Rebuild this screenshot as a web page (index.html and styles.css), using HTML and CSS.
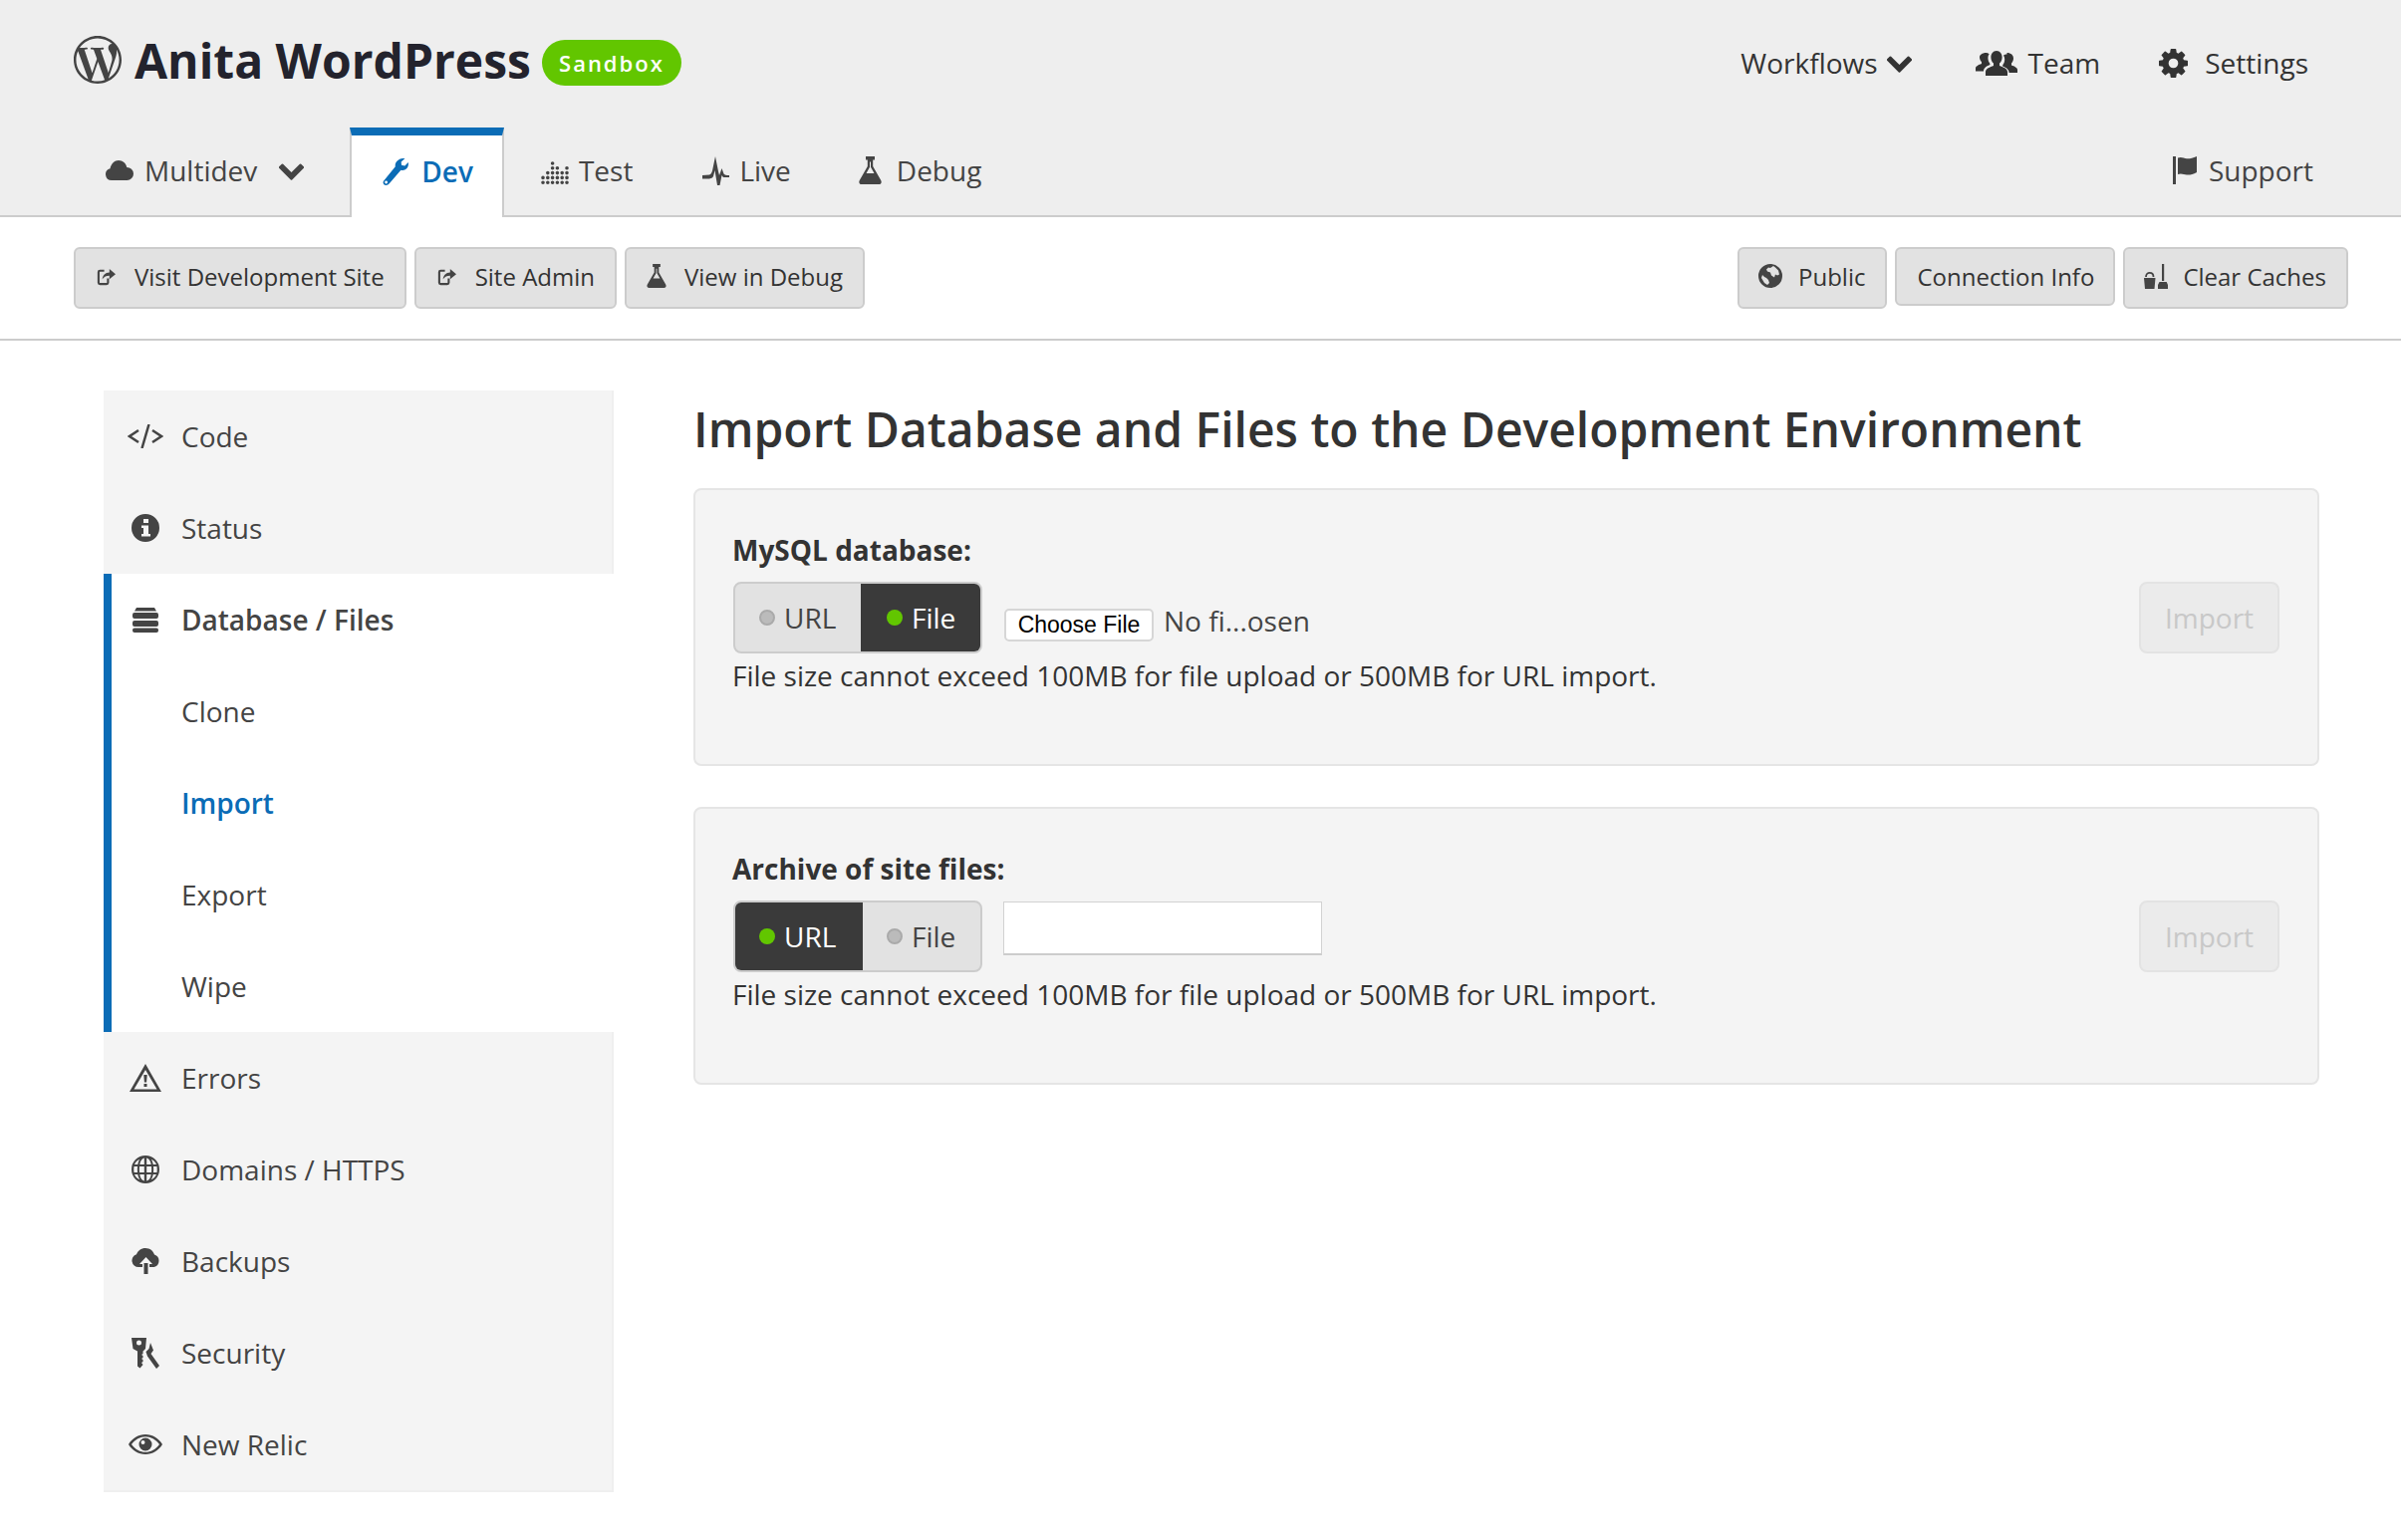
FILE: index.html
```html
<!DOCTYPE html>
<html lang="en">
<head>
<meta charset="UTF-8" />
<title>Anita WordPress - Import</title>
<link rel="stylesheet" href="styles.css">
</head>
<body>
  <!-- icon sprite -->
  <svg class="sprite" aria-hidden="true">
    <symbol id="i-wp" viewBox="0 0 24 24"><path d="M21.469 6.825c.84 1.537 1.318 3.3 1.318 5.175 0 3.979-2.156 7.456-5.363 9.325l3.295-9.527c.615-1.54.82-2.771.82-3.864 0-.405-.026-.78-.07-1.11m-7.981.105c.647-.03 1.232-.105 1.232-.105.582-.075.514-.93-.067-.899 0 0-1.755.135-2.88.135-1.064 0-2.85-.15-2.85-.15-.585-.03-.661.855-.075.885 0 0 .54.061 1.125.09l1.68 4.605-2.37 7.08L5.354 6.9c.649-.03 1.234-.1 1.234-.1.585-.075.516-.93-.065-.896 0 0-1.746.138-2.874.138-.2 0-.438-.008-.69-.015C4.911 3.15 8.235 1.215 12 1.215c2.809 0 5.365 1.072 7.286 2.833-.046-.003-.091-.009-.141-.009-1.06 0-1.812.923-1.812 1.914 0 .89.513 1.643 1.06 2.531.411.72.89 1.643.89 2.977 0 .915-.354 1.994-.821 3.479l-1.075 3.585-3.9-11.61.001.014zM12 22.784c-1.059 0-2.081-.153-3.048-.437l3.237-9.406 3.315 9.087c.024.053.05.101.078.149-1.12.393-2.325.609-3.582.609M1.211 12c0-1.564.336-3.05.935-4.39L7.29 21.709C3.694 19.96 1.212 16.271 1.211 12M12 0C5.385 0 0 5.385 0 12s5.385 12 12 12 12-5.385 12-12S18.615 0 12 0"/></symbol>
    <symbol id="i-chevron" viewBox="100 380 1592 1200"><path d="M1683 808l-742 741q-19 19-45 19t-45-19l-742-741q-19-19-19-45.5t19-45.5l166-165q19-19 45-19t45 19l531 531 531-531q19-19 45-19t45 19l166 165q19 19 19 45.5t-19 45.5z"/></symbol>
    <symbol id="i-cog" viewBox="128 128 1536 1536"><path d="M1152 896q0-106-75-181t-181-75-181 75-75 181 75 181 181 75 181-75 75-181zm512-109v222q0 12-8 23t-20 13l-185 28q-19 54-39 91 35 50 107 138 10 12 10 25t-9 23q-27 37-99 108t-94 71q-12 0-26-9l-138-108q-44 23-91 38-16 136-29 186-7 28-36 28h-222q-14 0-24.5-8.5t-11.5-21.5l-28-184q-49-16-90-37l-141 107q-10 9-25 9-14 0-25-11-126-114-165-168-7-10-7-23 0-12 8-23 15-21 51-66.5t54-70.5q-27-50-41-99l-183-27q-13-2-21-12.5t-8-23.5v-222q0-12 8-23t19-13l186-28q14-46 39-92-40-57-107-138-10-12-10-24 0-10 9-23 26-36 98.5-107.5t94.5-71.5q13 0 26 10l138 107q44-23 91-38 16-136 29-186 7-28 36-28h222q14 0 24.5 8.5t11.5 21.5l28 184q49 16 90 37l142-107q9-9 24-9 13 0 25 10 129 119 165 170 7 8 7 22 0 12-8 23-15 21-51 66.5t-54 70.5q26 50 41 98l183 28q13 2 21 12.5t8 23.5z"/></symbol>
    <symbol id="i-team" viewBox="0 0 42 26"><path d="M21 1c3.6 0 5.6 3 5.6 6.6 0 2.6-1 4.800-2.600 6v2.400c3.400 1.200 8 3 8 6V26H10v-4c0-3 4.600-4.800 8-6v-2.400c-1.600-1.200-2.600-3.400-2.600-6C15.400 4 17.400 1 21 1z"/><path d="M10.500 3c1.200 0 2.300.4 3.100 1.200-.8 1.200-1.200 2.500-1.200 3.900 0 2.200.7 4.300 2 5.800v1.200c-2.700 1-6.400 3-6.400 6.400H0v-3c0-2 3-3.500 6-4.500v-2c-1.200-1-2-2.800-2-4.800C4 5.400 6.500 3 10.500 3zM31.500 3C35.500 3 38 5.400 38 8.600c0 2-.8 3.800-2 4.800v2c3 1 6 2.500 6 4.500v3h-8.400c0-3.400-3.700-5.400-6.400-6.400v-1.200c1.300-1.500 2-3.600 2-5.800 0-1.400-.4-2.700-1.200-3.900.8-.8 1.900-1.200 3.500-1.200z"/></symbol>
    <symbol id="i-cloud" viewBox="0 0 28 20"><path d="M6 20a6 6 0 0 1-1.500-11.800C5.500 3.500 9 0 13 0c4.300 0 7.600 3 8.300 7A6.600 6.600 0 0 1 28 13.500 6.500 6.500 0 0 1 21.500 20z"/></symbol>
    <symbol id="i-wrench" viewBox="0 0 26 27"><path fill-rule="evenodd" d="M22.500 0l-3.800 3.400.3 3.400 3.300.7L25.800 4c.6 3-.6 6-3 7.300-1.300.7-3 .9-4.400.5L7 25c-1.300 1.500-3 2.400-4.500 1.800C.6 26 0 24 1.200 22.400L12.800 8.300c-.4-2 .2-4 1.700-5.600C16.500.7 19.500-.3 22.500 0zM3.600 22.600a1.400 1.400 0 1 0 0 2.800 1.400 1.400 0 0 0 0-2.800z"/></symbol>
    <symbol id="i-test" viewBox="0 0 28 27"><path fill="none" stroke="currentColor" stroke-width="3.600" stroke-linecap="round" stroke-dasharray="0 4.800" d="M2 25.200V20M6.800 25.200V15M11.600 25.200V1.200M16.400 25.200V10M21.200 25.200V15M26 25.200V6"/></symbol>
    <symbol id="i-live" viewBox="0 0 27 29"><path d="M0 19l7-.5c1.500-.4 2.300-1.500 3-4L13 0l3 15 1 4 2.500-7 2 5.500c1 1 2.500 1.500 5.500 1.500v2h-6l-1.500-2-2 10h-2.500l-2.500-15-1.500 6c-.8 1.500-2 2-4 2.500H0z"/></symbol>
    <symbol id="i-flask" viewBox="0 0 23 28"><path fill-rule="evenodd" d="M7 0h9v3.500h-1.800V10l8 14c1.200 2.200 0 4-2 4H2.800c-2 0-3.200-1.800-2-4l8-14V3.500H7zM11 5.500v5.300L7.500 17h8L12 10.800V5.500z"/></symbol>
    <symbol id="i-flag" viewBox="0 0 24 28"><path d="M0 0h3v28H0zM5 1.500c3.500-1.500 6 .5 9 .8 3 .2 6-.7 10-2.300v16c-4 2-7 2.800-10 2.500-3-.3-5.500-2-9-.5z"/></symbol>
    <symbol id="i-ext" viewBox="0 0 20 20"><path fill="none" stroke="currentColor" stroke-width="2.200" d="M8 4H3.500A1.500 1.500 0 0 0 2 5.500v11A1.500 1.500 0 0 0 3.500 18h7a1.500 1.500 0 0 0 1.500-1.500V12"/><path d="M6 13c.4-4 3-7 7.500-7.200V2L20 7.500 13.500 13V9.300C10 9.300 8 10.500 6 13z"/></symbol>
    <symbol id="i-globe-solid" viewBox="0 0 24 24"><path fill-rule="evenodd" d="M12 0a12 12 0 1 1 0 24 12 12 0 0 1 0-24zM15 2l-3 2-2-.500-2 2 1 2 3 1 1 3 3 2 1-3 2 1 2-1-1-4-3-3zM4 11l-1 3 3 5 3 2 2-2-1-3-2-2-2-1z"/></symbol>
    <symbol id="i-broom" viewBox="0 0 26 25"><path d="M18 0h2.200v17H18zM14 21l1.500-3h7.200l1.300 3v4H14zM0 14h11.500l-1 11H1z"/><path fill="none" stroke="currentColor" stroke-width="1.800" d="M2 13c0-5.500 7.500-5.500 7.500 0"/></symbol>
    <symbol id="i-code" viewBox="0 0 36 24"><path fill="none" stroke="currentColor" stroke-width="2.500" d="M11 6L2 12l9 6M25 6l9 6-9 6M21.500 0L14.500 24"/></symbol>
    <symbol id="i-info" viewBox="0 0 28 28"><path fill-rule="evenodd" d="M14 0a14 14 0 1 1 0 28 14 14 0 0 1 0-28zM12 5v4h5V5zM10 11.500v2.500h2v6h-2v2.500h9V20h-2v-8.500z"/></symbol>
    <symbol id="i-db" viewBox="0 0 26 25"><path d="M4 0h18l2 3.500H2zM2 5h22a2 2 0 0 1 2 2v2a2 2 0 0 1-2 2H2a2 2 0 0 1-2-2V7a2 2 0 0 1 2-2zM2 13h22a2 2 0 0 1 2 2v2a2 2 0 0 1-2 2H2a2 2 0 0 1-2-2v-2a2 2 0 0 1 2-2zM2 20.500h22a2 2 0 0 1 2 2v.5a2 2 0 0 1-2 2H2a2 2 0 0 1-2-2v-.5a2 2 0 0 1 2-2z"/></symbol>
    <symbol id="i-warn" viewBox="0 0 32 28"><path fill-rule="evenodd" d="M16 0L32 28H0zM16 6L4.500 25.500h23zM14.300 11h3.400l-.6 7.500h-2.200zM14.500 20h3v3h-3z"/></symbol>
    <symbol id="i-globe" viewBox="0 0 28 28"><path fill-rule="evenodd" d="M14 0a14 14 0 1 1 0 28 14 14 0 0 1 0-28zM12.800 2.500C10.500 3 8.800 5.500 8.300 9h4.500zM15.200 2.500V9h4.500c-.5-3.500-2.200-6-4.500-6.500zM6.300 9c.3-2 1-3.800 2-5.200C5.600 5 3.800 6.800 3 9zM21.700 9h3.300c-.8-2.200-2.600-4-5.300-5.200 1 1.400 1.700 3.200 2 5.200zM2.500 11c-.3 2-.3 4 0 6H6c-.2-2-.2-4 0-6zM8 11c-.2 2-.2 4 0 6h4.800v-6zM15.200 11v6H20c.2-2 .2-4 0-6zM22 11c.2 2 .2 4 0 6h3.500c.3-2 .3-4 0-6zM3 19c.8 2.200 2.600 4 5.300 5.200-1-1.400-1.700-3.200-2-5.200zM8.300 19c.5 3.500 2.200 6 4.500 6.500V19zM15.200 19v6.500c2.300-.5 4-3 4.500-6.500zM21.700 19c-.3 2-1 3.800-2 5.200 2.700-1.200 4.500-3 5.300-5.200z"/></symbol>
    <symbol id="i-upload" viewBox="0 0 29 26"><path fill-rule="evenodd" d="M7 19a6.500 6.500 0 0 1-2-12.700C6.200 2.500 9.800 0 14 0c4.500 0 7.800 2.800 9 6.500a6.500 6.500 0 0 1-.5 12.500H18v-3h3l-6.500-7L8 16h3v3z"/><path d="M12.500 15h4v11h-4z"/></symbol>
    <symbol id="i-keys" viewBox="0 0 28 31"><path fill-rule="evenodd" d="M0 0h15l-1 11-2.500 2.500V16l-1.500 1 1.500 1v2l-1.500 1 1.500 1v2l-1.500 1 1.500 2-3 3.500-2.500-2V13.500L1.500 11zM7.500 2.500a2.500 2.500 0 1 0 0 5 2.500 2.500 0 0 0 0-5z"/><path d="M19 5l3 7.500-2.500 3.500L28 28l-3 3-9-12.500-1.500-4.500 3-3z"/></symbol>
    <symbol id="i-eye" viewBox="0 0 34 20"><path fill-rule="evenodd" d="M17 0c7 0 13.500 4 17 10-3.500 6-10 10-17 10S3.500 16 0 10C3.500 4 10 0 17 0zM17 2.200C11.800 2.200 6.500 5 3 10c3.500 5 8.800 7.800 14 7.800S27.500 15 31 10c-3.500-5-8.800-7.800-14-7.800z"/><path fill-rule="evenodd" d="M17 3.500a6.500 6.500 0 1 1 0 13 6.500 6.500 0 0 1 0-13zM14.500 6a2 2 0 1 0 0 4 2 2 0 0 0 0-4z"/></symbol>
  </svg>

  <header class="site-head">
    <div class="head-top">
      <div class="brand">
        <svg class="ic ic-wp"><use href="#i-wp"/></svg>
        <span class="brand-name">Anita WordPress</span>
        <span class="badge">Sandbox</span>
      </div>
      <nav class="top-links">
        <a class="top-link top-link-workflows">Workflows <svg class="ic ic-chev-top"><use href="#i-chevron"/></svg></a>
        <a class="top-link top-link-team"><svg class="ic ic-team"><use href="#i-team"/></svg>Team</a>
        <a class="top-link"><svg class="ic ic-cog"><use href="#i-cog"/></svg>Settings</a>
      </nav>
    </div>
    <nav class="tabs">
      <a class="tab tab-multidev"><svg class="ic ic-cloud"><use href="#i-cloud"/></svg>Multidev<svg class="ic ic-chev-tab"><use href="#i-chevron"/></svg></a>
      <a class="tab tab-active"><svg class="ic ic-wrench"><use href="#i-wrench"/></svg>Dev</a>
      <a class="tab tab-test"><svg class="ic ic-test"><use href="#i-test"/></svg>Test</a>
      <a class="tab tab-live"><svg class="ic ic-live"><use href="#i-live"/></svg>Live</a>
      <a class="tab"><svg class="ic ic-flask"><use href="#i-flask"/></svg>Debug</a>
      <a class="tab tab-support"><svg class="ic ic-flag"><use href="#i-flag"/></svg>Support</a>
    </nav>
  </header>

  <div class="toolbar">
    <div class="btn-group">
      <a class="btn"><svg class="ic ic-ext"><use href="#i-ext"/></svg>Visit Development Site</a>
      <a class="btn"><svg class="ic ic-ext"><use href="#i-ext"/></svg>Site Admin</a>
      <a class="btn"><svg class="ic ic-flask-sm"><use href="#i-flask"/></svg>View in Debug</a>
    </div>
    <div class="btn-group">
      <a class="btn"><svg class="ic ic-public"><use href="#i-globe-solid"/></svg>Public</a>
      <a class="btn btn-short">Connection Info</a>
      <a class="btn"><svg class="ic ic-broom"><use href="#i-broom"/></svg>Clear Caches</a>
    </div>
  </div>

  <main class="main">
    <aside class="sidebar">
      <a class="side-item"><span class="side-icon"><svg class="ic ic-code"><use href="#i-code"/></svg></span>Code</a>
      <a class="side-item"><span class="side-icon"><svg class="ic ic-info"><use href="#i-info"/></svg></span>Status</a>
      <div class="side-group">
        <a class="side-item side-head"><span class="side-icon"><svg class="ic ic-db"><use href="#i-db"/></svg></span>Database / Files</a>
        <a class="side-item"><span class="side-icon"></span>Clone</a>
        <a class="side-item side-current"><span class="side-icon"></span>Import</a>
        <a class="side-item"><span class="side-icon"></span>Export</a>
        <a class="side-item"><span class="side-icon"></span>Wipe</a>
      </div>
      <a class="side-item"><span class="side-icon"><svg class="ic ic-warn"><use href="#i-warn"/></svg></span>Errors</a>
      <a class="side-item"><span class="side-icon"><svg class="ic ic-globe"><use href="#i-globe"/></svg></span>Domains / HTTPS</a>
      <a class="side-item"><span class="side-icon"><svg class="ic ic-upload"><use href="#i-upload"/></svg></span>Backups</a>
      <a class="side-item"><span class="side-icon"><svg class="ic ic-keys"><use href="#i-keys"/></svg></span>Security</a>
      <a class="side-item"><span class="side-icon"><svg class="ic ic-eye"><use href="#i-eye"/></svg></span>New Relic</a>
    </aside>

    <section class="content">
      <h1 class="page-title">Import Database and Files to the Development Environment</h1>

      <form class="panel">
        <div class="panel-body">
          <div class="panel-label">MySQL database:</div>
          <div class="source-row">
            <div class="seg">
              <span class="seg-opt"><i class="dot"></i>URL</span>
              <span class="seg-opt seg-on"><i class="dot"></i>File</span>
            </div>
            <div class="file-pick">
              <button type="button" class="file-btn">Choose File</button>
              <span class="file-name">No fi...osen</span>
            </div>
          </div>
          <p class="panel-help">File size cannot exceed 100MB for file upload or 500MB for URL import.</p>
        </div>
        <button type="button" class="import-btn" disabled>Import</button>
      </form>

      <form class="panel">
        <div class="panel-body">
          <div class="panel-label">Archive of site files:</div>
          <div class="source-row">
            <div class="seg">
              <span class="seg-opt seg-on"><i class="dot"></i>URL</span>
              <span class="seg-opt"><i class="dot"></i>File</span>
            </div>
            <input type="text" class="url-input" aria-label="Archive URL" />
          </div>
          <p class="panel-help">File size cannot exceed 100MB for file upload or 500MB for URL import.</p>
        </div>
        <button type="button" class="import-btn" disabled>Import</button>
      </form>
    </section>
  </main>
</body>
</html>
```

FILE: styles.css
```css
* {
  box-sizing: border-box;
}
body {
  margin: 0;
  font-family: "Open Sans", sans-serif;
  font-size: 28px;
  color: #444;
  background: #fff;
}
.sprite {
  display: none;
}
.ic {
  display: block;
  flex: none;
  fill: currentColor;
}

/* Header */
.site-head {
  background: #eee;
  border-bottom: 2px solid #ccc;
  height: 218px;
}
.head-top {
  height: 128px;
  display: flex;
  justify-content: space-between;
  align-items: center;
  padding: 0 93px 2px 74px;
}
.brand {
  display: flex;
  align-items: center;
  padding-bottom: 6px;
}
.ic-wp {
  width: 48px;
  height: 48px;
  color: #444;
}
.brand-name {
  font-size: 48px;
  font-weight: 700;
  color: #23232d;
  margin-left: 13px;
}
.badge {
  margin: 6px 0 0 11px;
  width: 140px;
  height: 46px;
  border-radius: 23px;
  background: #62c600;
  color: #fff;
  font-size: 22px;
  font-weight: 600;
  letter-spacing: 2px;
  display: flex;
  align-items: center;
  justify-content: center;
}
.top-links {
  display: flex;
  align-items: center;
  color: #333;
}
.top-link {
  display: flex;
  align-items: center;
  margin-left: 59px;
}
.top-link-workflows {
  margin-left: 0;
}
.top-link-team {
  margin-left: 64px;
}
.ic-chev-top {
  width: 25px;
  height: 19px;
  margin-left: 9px;
}
.ic-team {
  width: 42px;
  height: 26px;
  margin-right: 11px;
}
.ic-cog {
  width: 29px;
  height: 29px;
  margin-right: 17px;
}

/* Tabs */
.tabs {
  height: 90px;
  display: flex;
  align-items: stretch;
  padding: 0 88px 0 106px;
}
.tab {
  display: flex;
  align-items: center;
  padding: 0 35px 4px 35px;
}
.tab-multidev {
  padding: 0 46px 4px 0;
}
.tab-test {
  padding-left: 37px;
}
.tab-live {
  padding-right: 33px;
}
.tab-active {
  background: #fff;
  border: 2px solid #ccc;
  border-top: 8px solid #0b6cb6;
  border-bottom: 0;
  height: 90px;
  padding: 0 29px 10px 31px;
  color: #0b6cb6;
  font-weight: 600;
}
.tab-support {
  margin-left: auto;
  padding: 0 0 4px;
}
.ic-cloud {
  width: 28px;
  height: 20px;
  margin-right: 11px;
}
.ic-chev-tab {
  width: 25px;
  height: 19px;
  margin-left: 22px;
}
.ic-wrench {
  width: 26px;
  height: 27px;
  margin-right: 13px;
}
.ic-test {
  width: 28px;
  height: 27px;
  margin-right: 10px;
}
.ic-live {
  width: 27px;
  height: 29px;
  margin-right: 10px;
}
.ic-flask {
  width: 23px;
  height: 28px;
  margin-right: 15px;
}
.ic-flag {
  width: 24px;
  height: 28px;
  margin-right: 12px;
}

/* Toolbar */
.toolbar {
  height: 124px;
  border-bottom: 2px solid #ccc;
  display: flex;
  justify-content: space-between;
  align-items: flex-start;
  padding: 30px 53px 0 74px;
}
.btn-group {
  display: flex;
  align-items: flex-start;
  gap: 8px;
}
.btn {
  height: 62px;
  display: flex;
  align-items: center;
  padding: 0 20px 4px;
  background: #e2e2e2;
  border: 2px solid #ccc;
  border-radius: 6px;
  font-size: 24px;
  color: #333;
}
.btn-short {
  height: 59px;
  padding: 0 19px 1px 20px;
}
.ic-ext {
  width: 19px;
  height: 19px;
  margin: 0 19px 0 1px;
  color: #444;
}
.ic-flask-sm {
  width: 20px;
  height: 24px;
  margin-right: 18px;
  color: #444;
}
.ic-public {
  width: 24px;
  height: 24px;
  margin: 0 16px 0 -1px;
  color: #444;
}
.ic-broom {
  width: 26px;
  height: 25px;
  margin: 0 13px 0 -1px;
  color: #444;
}

/* Sidebar + content */
.main {
  display: flex;
  align-items: flex-start;
  padding: 50px 0 0 104px;
}
.sidebar {
  width: 512px;
  background: #f4f4f4;
  border-right: 2px solid #efefef;
  border-bottom: 2px solid #efefef;
  flex: none;
}
.side-item {
  height: 92px;
  display: flex;
  align-items: center;
}
.side-icon {
  width: 78px;
  padding: 0 18px 0 24px;
  height: 36px;
  display: flex;
  align-items: center;
  justify-content: center;
  flex: none;
}
.side-group {
  background: #fff;
  border-left: 8px solid #0b6cb6;
  margin-right: -2px;
}
.side-group .side-icon {
  width: 70px;
  padding: 0 18px 0 16px;
}
.side-head {
  font-weight: 600;
}
.side-current {
  color: #0b6cb6;
  font-weight: 600;
}
.ic-code {
  width: 36px;
  height: 24px;
}
.ic-info {
  width: 28px;
  height: 28px;
}
.ic-db {
  width: 26px;
  height: 25px;
}
.ic-warn {
  width: 32px;
  height: 28px;
}
.ic-globe {
  width: 28px;
  height: 28px;
}
.ic-upload {
  width: 29px;
  height: 26px;
}
.ic-keys {
  width: 28px;
  height: 31px;
}
.ic-eye {
  width: 34px;
  height: 20px;
}

.content {
  width: 1632px;
  margin-left: 80px;
  flex: none;
}
.page-title {
  margin: 0;
  height: 98px;
  font-size: 48px;
  font-weight: 600;
  line-height: 78px;
  color: #333;
}
.panel {
  height: 279px;
  margin-bottom: 41px;
  background: #f4f4f4;
  border: 2px solid #e5e5e5;
  border-radius: 8px;
  display: flex;
  justify-content: space-between;
  align-items: flex-start;
  padding: 40px 38px 0;
}
.panel-label {
  font-weight: 700;
  color: #333;
  font-size: 28px;
  line-height: 40px;
  margin: 0 0 12px -1px;
}
.source-row {
  display: flex;
  align-items: flex-start;
}
.seg {
  display: flex;
  width: 250px;
  height: 72px;
  border-radius: 8px;
  overflow: hidden;
  background: #e2e2e2;
  border: 2px solid #ccc;
}
.seg-opt {
  display: flex;
  flex: 1;
  align-items: center;
  padding-left: 24px;
  color: #444;
}
.seg-opt:first-child {
  width: 126px;
  flex: none;
}
.seg-on {
  background: #3a3a3a;
  color: #fff;
  padding-left: 26px;
  margin: -2px -2px -2px 0;
}
.seg-on:first-child {
  width: 130px;
  margin: -2px 0 -2px -2px;
}
.dot {
  width: 16px;
  height: 16px;
  border-radius: 50%;
  margin-right: 9px;
  background: #bbb;
  border: 2px solid #aaa;
  flex: none;
}
.seg-on .dot {
  background: #62c600;
  border: 0;
}
.file-pick {
  display: flex;
  align-items: flex-start;
  margin-left: 22px;
}
.file-btn {
  width: 150px;
  height: 33px;
  margin-top: 27px;
  padding: 0;
  background: #fff;
  border: 2px solid #d6d6d6;
  border-radius: 5px;
  font-family: "Liberation Sans", sans-serif;
  font-size: 23px;
  color: #000;
}
.file-name {
  margin: 20px 0 0 10px;
  line-height: 38px;
}
.url-input {
  width: 320px;
  height: 54px;
  margin: 1px 0 0 21px;
  background: #fff;
  border: 1px solid #d2d2d2;
  border-bottom: 2px solid #ccc;
  border-radius: 0;
}
.panel-help {
  margin: 3px 0 0 -1px;
  line-height: 38px;
  color: #333;
}
.import-btn {
  width: 141px;
  height: 72px;
  margin: 52px 0 0 0;
  background: #ebebeb;
  border: 2px solid #e3e3e3;
  border-radius: 8px;
  color: #c8c8c8;
  font-family: "Open Sans", sans-serif;
  font-size: 28px;
}
```
